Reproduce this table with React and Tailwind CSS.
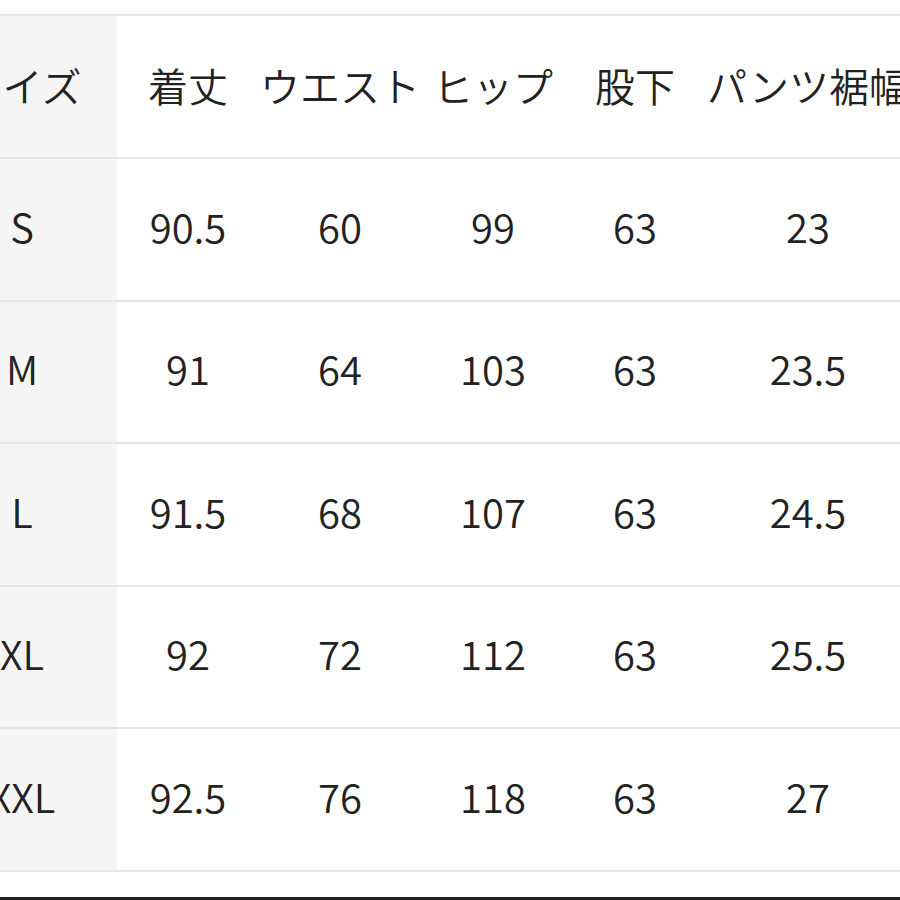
const headers = ["サイズ", "着丈", "ウエスト", "ヒップ", "股下", "パンツ裾幅"];

const rows = [
  ["S", "90.5", "60", "99", "63", "23"],
  ["M", "91", "64", "103", "63", "23.5"],
  ["L", "91.5", "68", "107", "63", "24.5"],
  ["XL", "92", "72", "112", "63", "25.5"],
  ["XXL", "92.5", "76", "118", "63", "27"],
];

function Row({ cells, first }) {
  return (
    <div
      className={
        "grid grid-cols-[190px_142px_162px_144px_140px_206px] border-b-2 border-[#e6e6e6] " +
        (first ? "h-[143px]" : "h-[142.5px]")
      }
    >
      {cells.map((c, i) => (
        <div
          key={i}
          className={
            "flex items-center justify-center whitespace-nowrap " +
            (first ? "pb-[3px] " : "pb-[7px] ") +
            (i === 0 ? "bg-[#f5f5f5]" : "")
          }
        >
          {c}
        </div>
      ))}
    </div>
  );
}

export default function App() {
  return (
    <div
      className="w-[900px] h-[900px] overflow-hidden bg-white pt-[14px] text-[40px] font-[350] text-[#222]"
      style={{ fontFamily: '"Noto Sans CJK JP", "Noto Sans", sans-serif' }}
    >
      <div className="border-t-2 border-[#e6e6e6]">
        <div className="ml-[-73px] w-[984px]">
          <Row cells={headers} first />
          {rows.map((r) => (
            <Row key={r[0]} cells={r} />
          ))}
        </div>
      </div>
      <div className="mt-[25px] h-[3px] bg-[#222]" />
    </div>
  );
}
